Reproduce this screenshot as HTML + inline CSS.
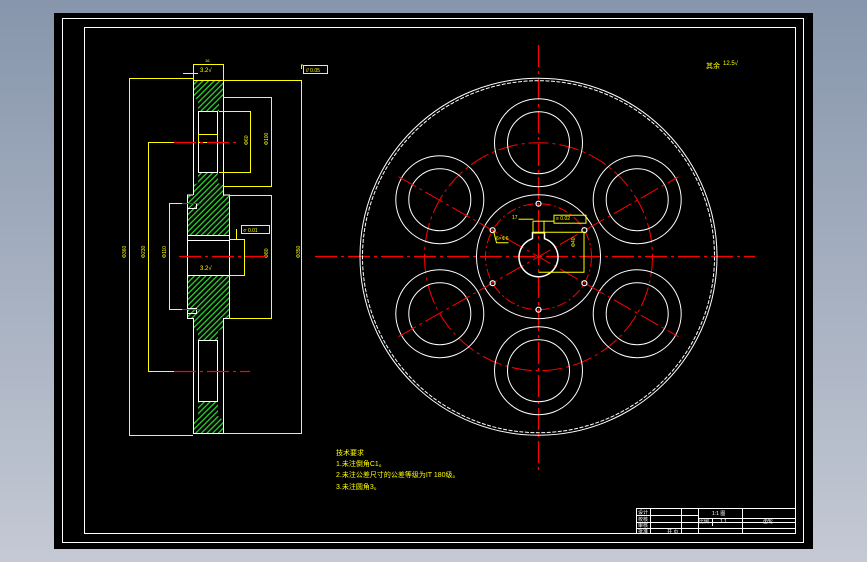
<!DOCTYPE html>
<html><head><meta charset="utf-8"><style>
html,body{margin:0;padding:0;width:867px;height:562px;overflow:hidden;background:linear-gradient(#8796ac,#c4c9d4);}
svg{position:absolute;left:0;top:0}
text{font-family:"Liberation Sans","Noto Sans CJK SC",sans-serif;fill:#ffff00}
</style></head><body>
<svg width="867" height="562" viewBox="0 0 867 562" xmlns="http://www.w3.org/2000/svg">
<defs>
<pattern id="h" width="4" height="4" patternUnits="userSpaceOnUse" patternTransform="rotate(45)">
<rect width="4" height="4" fill="#000"/><rect width="1.3" height="4" fill="#2fd02f"/>
</pattern>
</defs>
<rect x="54" y="13" width="759" height="536" fill="#000"/>
<rect x="62.5" y="18.5" width="741" height="524" fill="none" stroke="#fff" stroke-width="1"/>
<rect x="84.5" y="27.5" width="711" height="506" fill="none" stroke="#fff" stroke-width="1"/>

<g stroke="#fff" stroke-width="1" fill="none">
<rect x="636.5" y="508.5" width="159" height="25"/>
<line x1="636" y1="515.5" x2="698" y2="515.5"/>
<line x1="636" y1="522.5" x2="796" y2="522.5"/>
<line x1="636" y1="528.5" x2="796" y2="528.5"/>
<line x1="698" y1="518.5" x2="796" y2="518.5"/>
<line x1="650.5" y1="508" x2="650.5" y2="534"/>
<line x1="681.5" y1="508" x2="681.5" y2="534"/>
<line x1="698.5" y1="508" x2="698.5" y2="534"/>
<line x1="742.5" y1="508" x2="742.5" y2="534"/>
<line x1="712.5" y1="518" x2="712.5" y2="526"/>
</g>
<g style="font-size:5px" fill="#fff">
<text x="638" y="514" style="fill:#fff">设计</text><text x="638" y="521" style="fill:#fff">校核</text>
<text x="638" y="527" style="fill:#fff">审核</text><text x="638" y="533" style="fill:#fff">批准</text>
<text x="712" y="515" style="fill:#fff">1:1 图</text><text x="699" y="523" style="fill:#fff">比例</text>
<text x="720" y="523" style="fill:#fff">1 1</text><text x="763" y="523" style="fill:#fff">齿轮</text>
<text x="667" y="533" style="fill:#fff">共 页</text>
</g>

<g fill="url(#h)" stroke="none">
<polygon points="193,80 223,80 223,97 219,100 219,111 198,111 198,100 193,97"/>
<polygon points="198,172 218,172 218,183 223,185 223,195 229,195 229,235 187,235 187,195 193,195 193,185 198,183"/>
<polygon points="187,275 229,275 229,318 223,318 223,328 218,331 218,340 198,340 198,331 193,328 193,318 187,318"/>
<polygon points="198,402 218,402 218,416 223,420 223,433 193,433 193,420 198,416"/>
</g>
<g stroke="#fff" stroke-width="1" fill="none">
<line x1="193.5" y1="80" x2="193.5" y2="195"/><line x1="223.5" y1="80" x2="223.5" y2="195"/>
<line x1="193.5" y1="318" x2="193.5" y2="433"/><line x1="223.5" y1="318" x2="223.5" y2="433"/>
<line x1="193" y1="80.5" x2="224" y2="80.5"/><line x1="193" y1="433.5" x2="224" y2="433.5"/>
<rect x="198.5" y="111.5" width="19" height="61"/>
<rect x="198.5" y="340.5" width="19" height="61"/>
<polyline points="187.5,318 187.5,195 193,195"/><polyline points="229.5,318 229.5,195 223,195"/>
<line x1="187" y1="318.5" x2="193" y2="318.5"/><line x1="223" y1="318.5" x2="230" y2="318.5"/>
<rect x="187.5" y="235.5" width="42" height="40"/>
<line x1="187" y1="240.5" x2="230" y2="240.5"/>
<rect x="187.5" y="203.5" width="9" height="5"/><rect x="187.5" y="308.5" width="9" height="5"/>
</g>
<g stroke="#ffff00" stroke-width="1" fill="none">
<polyline points="193,78.5 129.5,78.5 129.5,435.5 193,435.5"/>
<polyline points="223,80.5 301.5,80.5 301.5,433.5 223,433.5"/>
<polyline points="301.5,69 301.5,65 303,65"/>
<rect x="303.5" y="65.5" width="24" height="8"/>
<rect x="193.5" y="64.5" width="30" height="16"/>
<polyline points="174,142.5 148.5,142.5 148.5,371.5 174,371.5"/>
<polyline points="196,203.5 169.5,203.5 169.5,309.5 196,309.5"/>
<polyline points="223,97.5 271.5,97.5 271.5,186.5 223,186.5"/>
<polyline points="219,111.5 250.5,111.5 250.5,172.5 219,172.5"/>
<polyline points="229,195.5 271.5,195.5 271.5,318.5 229,318.5"/>
<polyline points="229,239.5 244.5,239.5 244.5,275.5 229,275.5"/>
<rect x="241.5" y="225.5" width="28" height="8"/>
<line x1="236.5" y1="229" x2="236.5" y2="239"/>
<rect x="198.5" y="134.5" width="19" height="8"/>
<line x1="183" y1="73.5" x2="198" y2="73.5"/>
</g>
<g style="font-size:6px">
<text x="200" y="72">3.2√</text><text x="200" y="270">3.2√</text>
<text x="205" y="62" style="font-size:4px">16</text>
<text x="306" y="72" style="font-size:5px">// 0.05</text>
<text x="243" y="232" style="font-size:5px">⌭ 0.01</text>
<text x="126" y="258" transform="rotate(-90 126 258)" style="font-size:5px">Φ360</text>
<text x="145" y="258" transform="rotate(-90 145 258)" style="font-size:5px">Φ230</text>
<text x="166" y="258" transform="rotate(-90 166 258)" style="font-size:5px">Φ110</text>
<text x="300" y="258" transform="rotate(-90 300 258)" style="font-size:5px">Φ350</text>
<text x="268" y="258" transform="rotate(-90 268 258)" style="font-size:5px">Φ80</text>
<text x="268" y="145" transform="rotate(-90 268 145)" style="font-size:5px">Φ100</text>
<text x="248" y="145" transform="rotate(-90 248 145)" style="font-size:5px">Φ60</text>
</g>
<g stroke="#ff0000" stroke-width="1.2" stroke-dasharray="22,4,3,4" fill="none">
<line x1="174" y1="142.5" x2="240" y2="142.5"/>
<line x1="179" y1="256.5" x2="266" y2="256.5"/>
<line x1="174" y1="371.5" x2="250" y2="371.5"/>
<line x1="315" y1="256.5" x2="755" y2="256.5"/>
<line x1="538.5" y1="45" x2="538.5" y2="470"/>
</g>
<g stroke="#ff0000" stroke-width="1" fill="none">
<line x1="182" y1="203.5" x2="201" y2="203.5"/><line x1="182" y1="309.5" x2="201" y2="309.5"/>
</g>

<g transform="translate(538.5,256.7)" fill="none">
<circle r="178.5" stroke="#fff" stroke-width="1"/>
<circle r="176" stroke="#fff" stroke-width="1" stroke-dasharray="4,1.5"/>
<circle r="114" stroke="#ff0000" stroke-width="1" stroke-dasharray="20,4,3,4"/>
<g stroke="#fff" stroke-width="1">
<circle cx="0" cy="-114" r="44"/><circle cx="0" cy="-114" r="31"/>
<circle cx="0" cy="114" r="44"/><circle cx="0" cy="114" r="31"/>
<circle cx="98.7" cy="-57" r="44"/><circle cx="98.7" cy="-57" r="31"/>
<circle cx="-98.7" cy="-57" r="44"/><circle cx="-98.7" cy="-57" r="31"/>
<circle cx="98.7" cy="57" r="44"/><circle cx="98.7" cy="57" r="31"/>
<circle cx="-98.7" cy="57" r="44"/><circle cx="-98.7" cy="57" r="31"/>
<circle r="62"/>
</g>
<g stroke="#ff0000" stroke-width="1" stroke-dasharray="20,4,3,4">
<line x1="-140" y1="-80" x2="140" y2="80"/><line x1="-140" y1="80" x2="140" y2="-80"/>
</g>
<circle r="53" stroke="#ff0000" stroke-width="1" stroke-dasharray="10,3,2,3"/>
<g stroke="#fff" stroke-width="1.2">
<circle cx="0" cy="-53" r="2.5"/><circle cx="0" cy="53" r="2.5"/>
<circle cx="45.9" cy="-26.5" r="2.5"/><circle cx="-45.9" cy="-26.5" r="2.5"/>
<circle cx="45.9" cy="26.5" r="2.5"/><circle cx="-45.9" cy="26.5" r="2.5"/>
<path d="M-6,-18 L-6,-24 L6,-24 L6,-18 A19.5,19.5 0 1 1 -6,-18" stroke-width="1.5"/>
</g>
<g stroke="#ffff00" stroke-width="1">
<rect x="-5.5" y="-35.5" width="11" height="11"/>
<rect x="15.5" y="-41.5" width="32" height="8"/>
<line x1="5" y1="-35.5" x2="15" y2="-35.5"/>
<polyline points="6,-24.5 45.5,-24.5 45.5,15.5 0,15.5"/>
<line x1="-20" y1="-37.5" x2="-5" y2="-37.5"/>
<polyline points="-45,-26 -42,-14 -30,-14"/>
</g>
</g>
<g style="font-size:5px">
<text x="583" y="239" transform="rotate(-90 583 247)">Φ40</text>
<text x="512" y="219">17</text><text x="556" y="220">≡ 0.02</text>
<text x="496" y="240">6×Φ6</text>
</g>
<g style="font-size:7px">
<text x="706" y="68">其余 </text><text x="723" y="65" style="font-size:6px">12.5√</text>
<text x="336" y="455">技术要求</text>
<text x="336" y="466">1.未注倒角C1。</text>
<text x="336" y="477">2.未注公差尺寸的公差等级为IT 180级。</text>
<text x="336" y="489">3.未注圆角3。</text>
</g>
</svg>
</body></html>
